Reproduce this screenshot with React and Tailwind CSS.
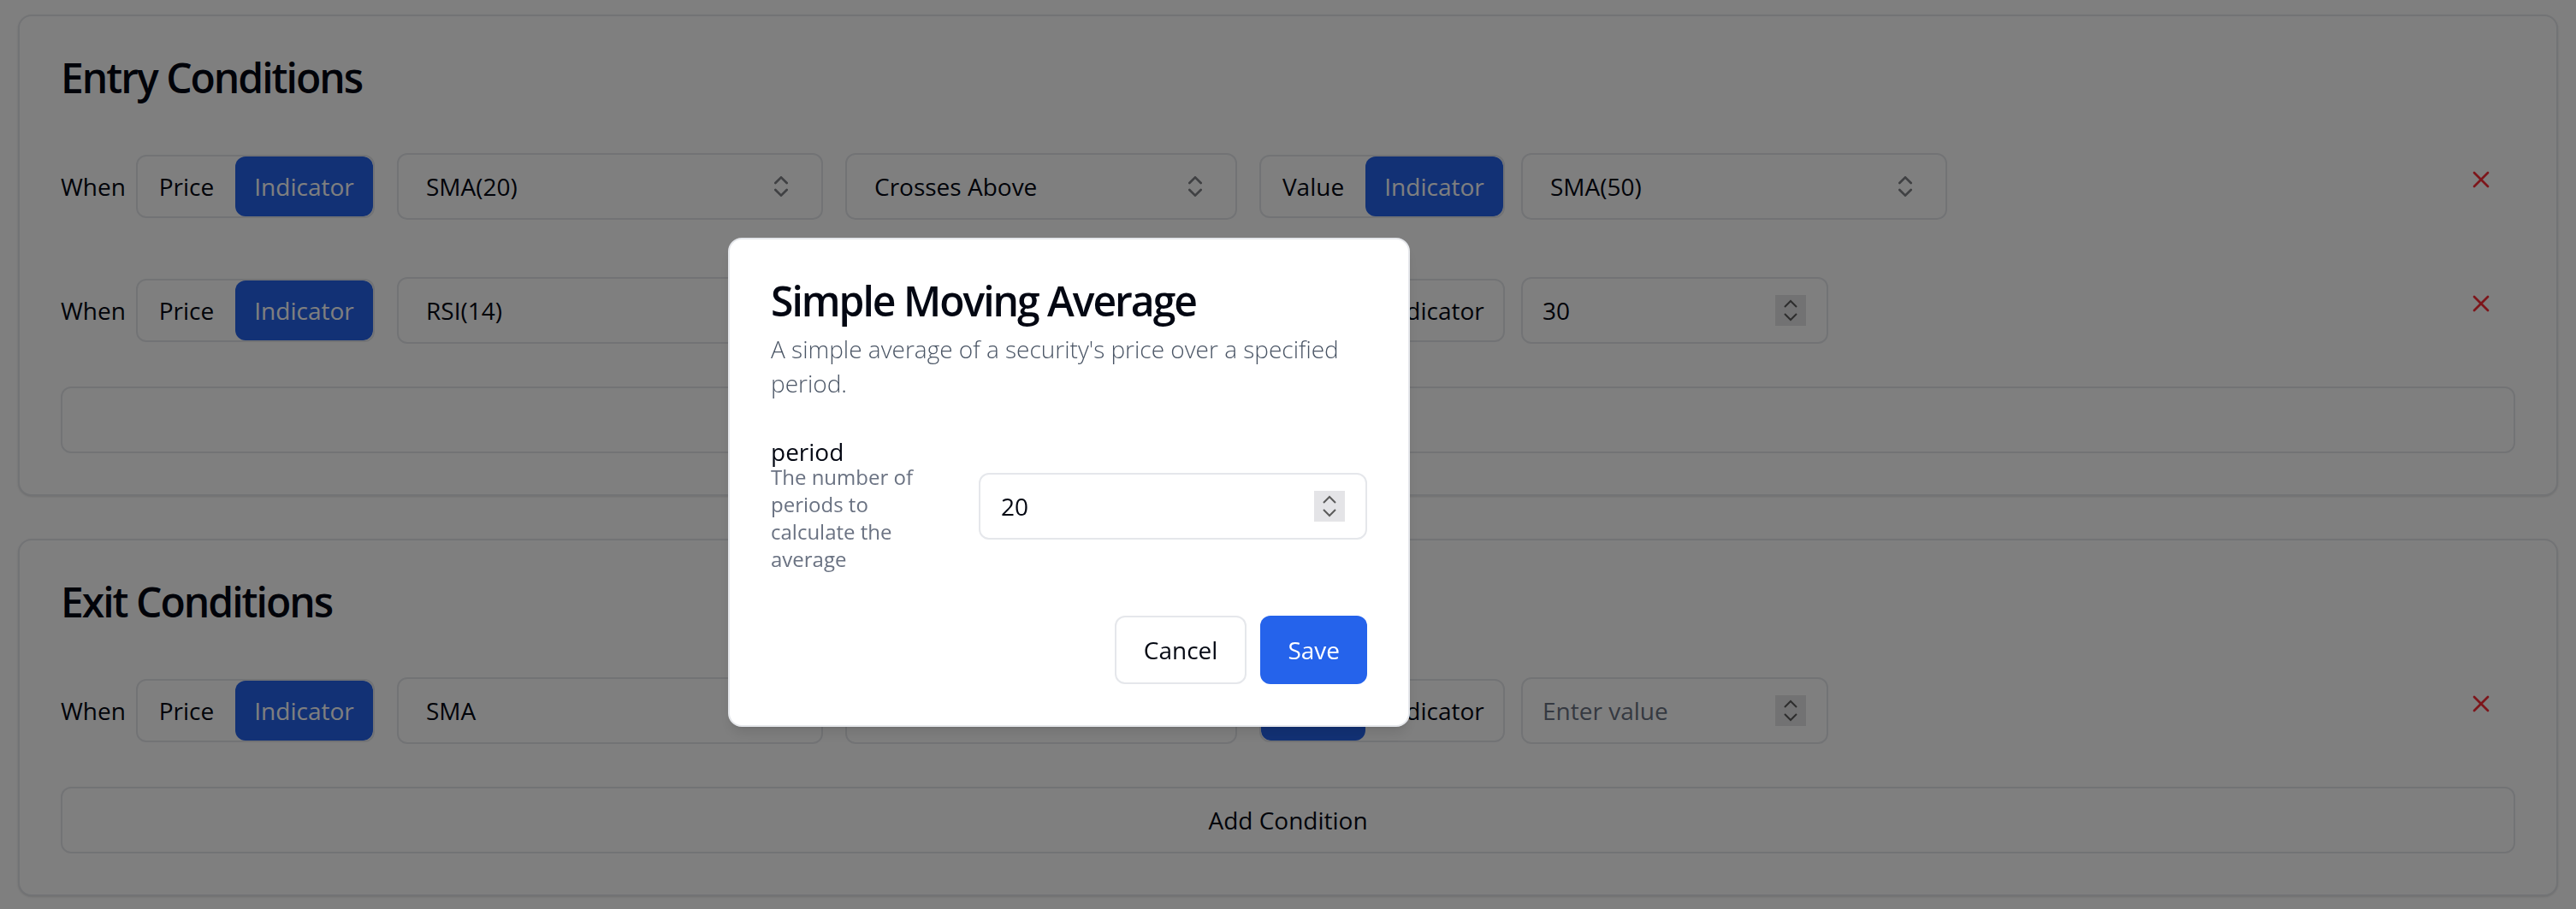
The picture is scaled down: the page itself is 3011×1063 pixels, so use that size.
import React from "react";
import { ChevronsUpDown, X } from "lucide-react";

// two-way toggle: Price/Indicator or Value/Indicator
const Toggle = ({ left, leftWidth, active, className = "" }) => (
  <div
    className={`flex h-[74px] overflow-hidden rounded-[12px] border-2 border-gray-200 bg-white ${className}`}
  >
    <button
      type="button"
      className={`${leftWidth} h-full text-[28px] font-medium ${
        active === "left" ? "bg-[#2563eb] text-white rounded-[12px]" : "text-gray-950"
      }`}
    >
      {left}
    </button>
    <button
      type="button"
      className={`w-[161px] h-full text-[28px] font-medium ${
        active === "right" ? "bg-[#2563eb] text-white rounded-[12px]" : "text-gray-950"
      }`}
    >
      Indicator
    </button>
  </div>
);

const SelectBox = ({ value, className = "" }) => (
  <div
    className={`flex h-[78px] items-center justify-between rounded-[12px] border-2 border-gray-200 bg-white pl-[32px] pr-[31px] text-[28px] text-gray-950 ${className}`}
  >
    <span>{value}</span>
    <ChevronsUpDown size={32} strokeWidth={2} className="opacity-50" />
  </div>
);

const Stepper = () => (
  <div className="h-[36px] w-[36px] bg-[#e4e4e7]">
    <svg width="36" height="36" viewBox="0 0 36 36" fill="none" stroke="#5b5b5b" strokeWidth="2">
      <path d="M11 14 L18 7 L25 14" />
      <path d="M11 22 L18 29 L25 22" />
    </svg>
  </div>
);

const NumberBox = ({ value, placeholder, className = "" }) => (
  <div
    className={`flex h-[78px] items-center rounded-[12px] border-2 border-gray-200 bg-white pl-[23px] pr-[24px] text-[28px] ${className}`}
  >
    {value ? (
      <span className="text-gray-950">{value}</span>
    ) : (
      <span className="text-gray-500">{placeholder}</span>
    )}
    <div className="ml-auto">
      <Stepper />
    </div>
  </div>
);

const ConditionRow = ({ indicator, operator, valueMode, target }) => (
  <div className="flex items-center py-[16px]">
    <span className="w-[70px] text-[28px] text-gray-950">When</span>
    <Toggle left="Price" leftWidth="w-[114px]" active="right" className="ml-[18px]" />
    <SelectBox value={indicator} className="ml-[26px] w-[498px]" />
    <SelectBox value={operator} className="ml-[26px] w-[458px]" />
    <Toggle
      left="Value"
      leftWidth="w-[122px]"
      active={valueMode === "value" ? "left" : "right"}
      className="ml-[26px]"
    />
    {valueMode === "value" ? (
      <NumberBox value={target} placeholder="Enter value" className="ml-[19px] w-[359px]" />
    ) : (
      <SelectBox value={target} className="ml-[19px] w-[498px]" />
    )}
    <button
      type="button"
      className="ml-auto flex h-[78px] w-[80px] -translate-y-[8px] items-center justify-center text-red-500"
    >
      <X size={32} strokeWidth={2} />
    </button>
  </div>
);

const AddButton = () => (
  <button
    type="button"
    className="mt-[34px] flex h-[78px] w-full items-center justify-center rounded-[12px] border-2 border-gray-200 bg-white text-[28px] font-medium text-gray-950"
  >
    Add Condition
  </button>
);

const Card = ({ title, children }) => (
  <div className="rounded-[16px] border-2 border-gray-200 bg-white shadow-sm">
    <div className="p-[48px]">
      <h2 className="text-[48px] font-semibold leading-none tracking-[-2px] text-gray-950">
        {title}
      </h2>
    </div>
    <div className="px-[48px] pb-[48px]">{children}</div>
  </div>
);

export default function App() {
  return (
    <div className="min-h-screen bg-white px-[21px] pt-[17px] font-['Open_Sans',sans-serif]">
      <div className="flex flex-col gap-[50px]">
        <Card title="Entry Conditions">
          <div className="flex flex-col gap-[35px]">
            <ConditionRow
              indicator="SMA(20)"
              operator="Crosses Above"
              valueMode="indicator"
              target="SMA(50)"
            />
            <ConditionRow
              indicator="RSI(14)"
              operator="Crosses Below"
              valueMode="value"
              target="30"
            />
          </div>
          <AddButton />
        </Card>

        <Card title="Exit Conditions">
          <ConditionRow
            indicator="SMA"
            operator="Crosses Below"
            valueMode="value"
            target=""
          />
          <AddButton />
        </Card>
      </div>

      {/* dialog overlay */}
      <div className="fixed inset-0 z-40 bg-black/50" />
      <div className="fixed left-[851px] top-[278px] z-50 w-[797px] rounded-[16px] border-2 border-gray-200 bg-white p-[48px] shadow-lg">
        <h2 className="text-[48px] font-semibold leading-none tracking-[-2px] text-gray-950">
          Simple Moving Average
        </h2>
        <p className="mt-[12px] text-[28px] font-light leading-[40px] text-gray-600">
          A simple average of a security's price over a specified period.
        </p>
        <div className="mt-[46px] grid grid-cols-3 items-center gap-x-[32px]">
          <div>
            <label className="block text-[28px] font-medium leading-none text-gray-950">
              period
            </label>
            <p className="text-[24px] leading-[32px] text-gray-500">
              The number of periods to calculate the average
            </p>
          </div>
          <div className="col-span-2 flex h-[78px] items-center rounded-[12px] border-2 border-gray-200 bg-white pl-[24px] pr-[24px] text-[28px] text-gray-950">
            <span>20</span>
            <div className="ml-auto">
              <Stepper />
            </div>
          </div>
        </div>
        <div className="mt-[50px] flex justify-end gap-[16px]">
          <button
            type="button"
            className="h-[80px] rounded-[12px] border-2 border-gray-200 bg-white px-[32px] text-[28px] font-medium text-gray-950"
          >
            Cancel
          </button>
          <button
            type="button"
            className="h-[80px] rounded-[12px] bg-[#2563eb] px-[32px] text-[28px] font-medium text-white"
          >
            Save
          </button>
        </div>
      </div>
    </div>
  );
}
